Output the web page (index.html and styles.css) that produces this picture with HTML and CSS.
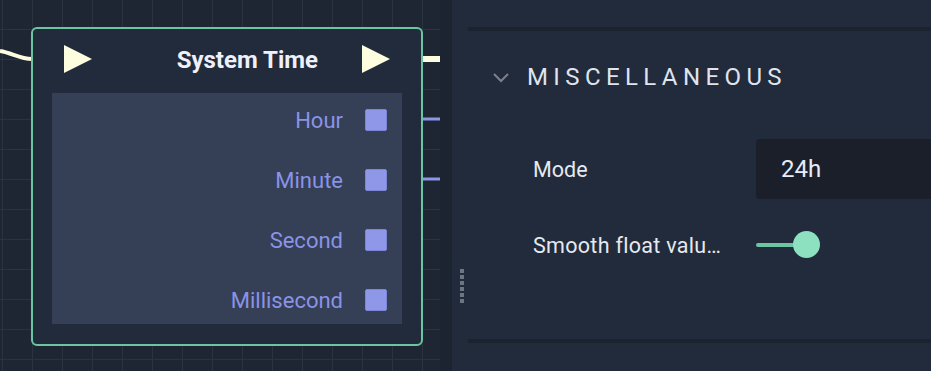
FILE: index.html
```html
<!DOCTYPE html>
<html lang="en">
<head>
  <meta charset="UTF-8">
  <meta name="viewport" content="width=device-width, initial-scale=1.0">
  <title>System Time</title>
  <link rel="stylesheet" href="styles.css">
</head>
<body>
  <div class="canvas">
    <svg class="wires" width="440" height="371">
      <path d="M0 51 C 12 53, 20 59, 32 59" stroke="#fdfde0" stroke-width="4" fill="none"/>
      <line x1="422" y1="59" x2="440" y2="59" stroke="#fdfde0" stroke-width="6"/>
      <line x1="422" y1="119" x2="440" y2="119" stroke="#8e96e8" stroke-width="3"/>
      <line x1="422" y1="179" x2="440" y2="179" stroke="#8e96e8" stroke-width="3"/>
    </svg>

    <div class="node">
      <div class="node-header">
        <svg class="flow" width="28" height="28" viewBox="0 0 28 28"><polygon points="0,0 28,14 0,28" fill="#fdfde0"/></svg>
        <span class="node-title">System Time</span>
        <svg class="flow" width="28" height="28" viewBox="0 0 28 28"><polygon points="0,0 28,14 0,28" fill="#fdfde0"/></svg>
      </div>
      <div class="node-body">
        <div class="port"><span>Hour</span><i class="pin"></i></div>
        <div class="port"><span>Minute</span><i class="pin"></i></div>
        <div class="port"><span>Second</span><i class="pin"></i></div>
        <div class="port"><span>Millisecond</span><i class="pin"></i></div>
      </div>
    </div>
  </div>

  <div class="gutter"></div>

  <div class="panel">
    <div class="grip">
      <i></i><i></i><i></i><i></i><i></i><i></i>
    </div>
    <div class="section">
      <div class="section-head">
        <svg class="chevron" width="16" height="10" viewBox="0 0 16 10"><polyline points="1,1 8,8 15,1" fill="none" stroke="#7c818c" stroke-width="2"/></svg>
        <span class="section-title">MISCELLANEOUS</span>
      </div>
      <div class="prop">
        <span class="prop-label">Mode</span>
        <div class="select">24h</div>
      </div>
      <div class="prop toggle-row">
        <span class="prop-label">Smooth float valu…</span>
        <div class="toggle"><span class="track"></span><span class="knob"></span></div>
      </div>
    </div>
  </div>
</body>
</html>
```

FILE: styles.css
```css
body {
  margin: 0;
  width: 931px;
  height: 371px;
  overflow: hidden;
  display: flex;
  font-family: Roboto, "Liberation Sans", sans-serif;
  background-color: #1f2633;
}

.canvas {
  position: relative;
  width: 440px;
  height: 371px;
  background-color: #1f2633;
  background-image:
    linear-gradient(to right, #2b3341 1px, transparent 1px),
    linear-gradient(to bottom, #2b3341 1px, transparent 1px);
  background-size: 30px 30px;
  background-position: 2px 0, 0 29px;
}

.wires {
  position: absolute;
  left: 0;
  top: 0;
}

.node {
  position: absolute;
  left: 31px;
  top: 27px;
  width: 392px;
  height: 319px;
  box-sizing: border-box;
  border: 2px solid #6cc5a0;
  border-radius: 6px;
  background-color: #222b3b;
}

.node-header {
  height: 64px;
  display: flex;
  align-items: center;
  padding: 0 31px;
}

.node-header .flow {
  margin-top: -4px;
}

.node-title {
  margin-left: auto;
  margin-right: 44px;
  margin-top: -3px;
  font-size: 24px;
  font-weight: bold;
  color: #eef0fb;
}

.node-body {
  margin: 0 19px;
  height: 231px;
  box-sizing: border-box;
  padding: 9px 15px 6px 0;
  background-color: #353f56;
  display: flex;
  flex-direction: column;
  gap: 24px;
}

.port {
  height: 36px;
  display: flex;
  align-items: center;
  justify-content: flex-end;
  gap: 22px;
  font-size: 22px;
  color: #8a93e6;
}

.pin {
  width: 22px;
  height: 22px;
  box-sizing: border-box;
  background-color: #8f97e9;
  border: 1px solid #7d86d6;
  border-radius: 2px;
}

.gutter {
  width: 12px;
  background-color: #1d2431;
}

.panel {
  position: relative;
  flex: 1;
  background-color: #222b3b;
  padding-top: 27px;
}

.grip {
  position: absolute;
  left: 8px;
  top: 269px;
  display: flex;
  flex-direction: column;
  gap: 2px;
}

.grip i {
  width: 4px;
  height: 4px;
  background-color: #6d7482;
}

.section {
  margin-left: 16px;
  height: 316px;
  box-sizing: border-box;
  border-top: 4px solid #1c2330;
  border-bottom: 4px solid #1c2330;
}

.section-head {
  display: flex;
  align-items: center;
  height: 60px;
  margin-top: 16px;
  padding-left: 25px;
}

.chevron {
  margin-right: 18px;
  margin-top: 2px;
}

.section-title {
  font-size: 24px;
  letter-spacing: 5.4px;
  color: #dfe4ee;
}

.prop {
  display: flex;
  align-items: center;
  height: 60px;
  margin-top: 32px;
  padding-left: 65px;
}

.prop-label {
  width: 223px;
  font-size: 21.5px;
  color: #e6e9f0;
}

.toggle-row .prop-label {
  letter-spacing: 0.3px;
}

.select {
  flex: 1;
  height: 60px;
  box-sizing: border-box;
  padding-left: 25px;
  line-height: 60px;
  font-size: 24px;
  color: #e8ecf5;
  background-color: #1a1f29;
  border-radius: 4px 0 0 4px;
}

.toggle-row {
  height: 40px;
  margin-top: 26px;
}

.toggle {
  position: relative;
  width: 64px;
  height: 28px;
}

.toggle .track {
  position: absolute;
  left: 0;
  top: 12px;
  width: 40px;
  height: 4px;
  border-radius: 2px;
  background-color: #6cc5a0;
}

.toggle .knob {
  position: absolute;
  left: 37px;
  top: 0;
  width: 27px;
  height: 27px;
  border-radius: 50%;
  background-color: #8de0c0;
}
```
